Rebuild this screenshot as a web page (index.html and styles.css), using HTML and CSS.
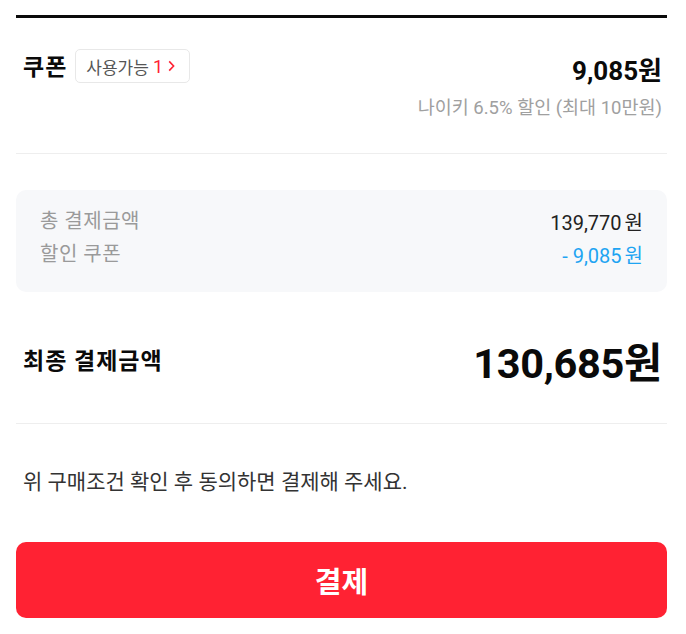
FILE: index.html
```html
<!DOCTYPE html>
<html lang="ko">
<head>
<meta charset="utf-8">
<link rel="stylesheet" href="styles.css">
</head>
<body>
<div class="page">
  <div class="topbar"></div>

  <section class="coupon">
    <div class="coupon-row">
      <div class="coupon-left">
        <span class="coupon-title">쿠폰</span>
        <span class="badge">사용가능 <span class="badge-count">1</span><svg class="chev" width="7" height="12" viewBox="0 0 7 12"><path d="M1.2 1.4 L5.6 6 L1.2 10.6" fill="none" stroke="#ff2233" stroke-width="1.6"/></svg></span>
      </div>
      <span class="coupon-amount">9,085원</span>
    </div>
    <div class="coupon-desc">나이키 6.5% 할인 (최대 10만원)</div>
  </section>

  <div class="divider"></div>

  <section class="summary">
    <div class="sum-row">
      <span class="sum-label">총 결제금액</span>
      <span class="sum-value">139,770<span class="won">원</span></span>
    </div>
    <div class="sum-row">
      <span class="sum-label">할인 쿠폰</span>
      <span class="sum-value discount">- 9,085<span class="won">원</span></span>
    </div>
  </section>

  <section class="final">
    <span class="final-label">최종 결제금액</span>
    <span class="final-amount">130,685원</span>
  </section>

  <div class="divider"></div>

  <p class="notice">위 구매조건 확인 후 동의하면 결제해 주세요.</p>

  <button class="pay">결제</button>
</div>
</body>
</html>
```

FILE: styles.css
```css
html, body {
  margin: 0;
  padding: 0;
  background: #ffffff;
}

body {
  font-family: Roboto, "Noto Sans CJK KR", sans-serif;
  color: #111111;
}

.page {
  width: 651px;
  margin-left: 16px;
  padding-top: 15px;
}

.topbar {
  height: 3px;
  background: #0a0a0a;
}

.coupon {
  padding: 31px 5px 0 7px;
}

.coupon-row {
  display: flex;
  justify-content: space-between;
  align-items: center;
  height: 34px;
}

.coupon-left {
  display: flex;
  align-items: center;
  gap: 8px;
}

.coupon-title {
  font-size: 23px;
  font-weight: 700;
  letter-spacing: 1px;
  color: #0a0a0a;
  line-height: 34px;
  position: relative;
  top: 2px;
}

.badge {
  box-sizing: border-box;
  display: flex;
  align-items: center;
  height: 34px;
  width: 115px;
  padding-left: 10px;
  border: 1px solid #e8e8e8;
  border-radius: 5px;
  font-size: 17px;
  color: #555555;
  white-space: pre;
}

.badge-count {
  color: #ff2233;
  font-size: 18px;
}

.chev {
  margin-left: 5px;
}

.coupon-amount {
  font-size: 26px;
  font-weight: 700;
  color: #0a0a0a;
  position: relative;
  top: 2px;
}

.coupon-desc {
  margin-top: 13px;
  text-align: right;
  font-size: 18.5px;
  line-height: 24px;
  color: #a0a0a0;
  padding-bottom: 33px;
}

.divider {
  height: 1px;
  background: #eeeeee;
}

.summary {
  margin-top: 36px;
  background: #f7f8fa;
  border-radius: 10px;
  padding: 15px 24px 21px 24px;
}

.sum-row {
  display: flex;
  justify-content: space-between;
  align-items: center;
  line-height: 33px;
  height: 33px;
}

.sum-label {
  font-size: 20px;
  letter-spacing: 0.5px;
  color: #9a9a9a;
}

.sum-value {
  font-size: 20px;
  color: #222222;
  position: relative;
  top: 2px;
}

.sum-value .won {
  margin-left: 3px;
}

.discount {
  color: #1ea4f2;
}

.final {
  margin-top: 46px;
  display: flex;
  justify-content: space-between;
  align-items: center;
  height: 48px;
  padding: 0 5px 0 7px;
  margin-bottom: 37px;
}

.final-label {
  font-size: 23px;
  font-weight: 700;
  letter-spacing: 1px;
  color: #0a0a0a;
  position: relative;
  top: -3px;
}

.final-amount {
  font-size: 41.5px;
  font-weight: 700;
  color: #0a0a0a;
  letter-spacing: -0.3px;
  position: relative;
  top: -2px;
}

.notice {
  margin: 44px 0 0 0;
  padding: 0 7px;
  font-size: 21px;
  line-height: 28px;
  color: #333333;
}

.pay {
  display: block;
  margin-top: 46px;
  width: 100%;
  height: 76px;
  border: none;
  border-radius: 10px;
  background: #ff2233;
  color: #ffffff;
  font-family: Roboto, "Noto Sans CJK KR", sans-serif;
  font-size: 29px;
  font-weight: 700;
  padding: 0;
}
```
